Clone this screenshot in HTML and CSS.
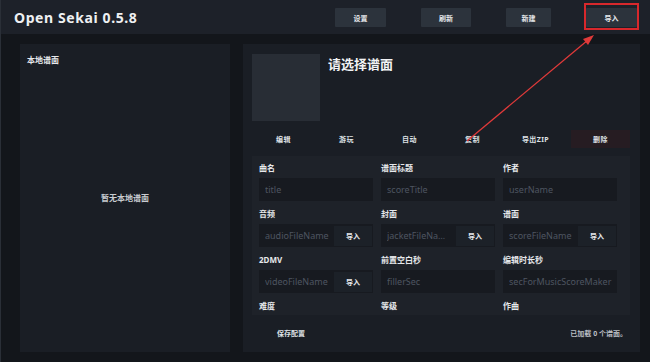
FILE: index.html
```html
<!DOCTYPE html>
<html lang="zh">
<head>
    <meta charset="UTF-8">
    <meta name="viewport" content="width=device-width, initial-scale=1.0">
    <title>Open Sekai</title>
    <link rel="stylesheet" href="styles.css">
</head>
<body>

<header class="topbar">
    <div class="brand">Open Sekai 0.5.8</div>
    <nav class="top-actions">
        <button class="top-btn w51">设置</button>
        <button class="top-btn w50">刷新</button>
        <button class="top-btn w45">新建</button>
        <button class="top-btn w51">导入</button>
    </nav>
</header>

<main class="layout">
    <!-- 本地谱面 -->
    <section class="panel local">
        <h2 class="panel-title">本地谱面</h2>
        <p class="empty">暂无本地谱面</p>
    </section>

    <!-- 谱面详情 -->
    <section class="panel detail">
        <div class="detail-head">
            <div class="cover"></div>
            <h1 class="detail-title">请选择谱面</h1>
        </div>

        <div class="actions">
            <button class="act">编辑</button>
            <button class="act">游玩</button>
            <button class="act">自动</button>
            <button class="act">复制</button>
            <button class="act">导出ZIP</button>
            <button class="act danger">删除</button>
        </div>

        <div class="fields">
            <div class="field">
                <label>曲名</label>
                <div class="box"><span class="ph">title</span></div>
            </div>
            <div class="field">
                <label>谱面标题</label>
                <div class="box"><span class="ph">scoreTitle</span></div>
            </div>
            <div class="field">
                <label>作者</label>
                <div class="box"><span class="ph">userName</span></div>
            </div>

            <div class="field">
                <label>音频</label>
                <div class="box"><span class="ph">audioFileName</span><button class="pick">导入</button></div>
            </div>
            <div class="field">
                <label>封面</label>
                <div class="box"><span class="ph">jacketFileNa…</span><button class="pick">导入</button></div>
            </div>
            <div class="field">
                <label>谱面</label>
                <div class="box"><span class="ph">scoreFileName</span><button class="pick">导入</button></div>
            </div>

            <div class="field">
                <label>2DMV</label>
                <div class="box"><span class="ph">videoFileName</span><button class="pick">导入</button></div>
            </div>
            <div class="field">
                <label>前置空白秒</label>
                <div class="box"><span class="ph">fillerSec</span></div>
            </div>
            <div class="field">
                <label>编辑时长秒</label>
                <div class="box"><span class="ph">secForMusicScoreMaker</span></div>
            </div>

            <div class="field">
                <label>难度</label>
                <div class="box"></div>
            </div>
            <div class="field">
                <label>等级</label>
                <div class="box"></div>
            </div>
            <div class="field">
                <label>作曲</label>
                <div class="box"></div>
            </div>
        </div>

        <div class="detail-foot">
            <button class="save">保存配置</button>
            <span class="count">已加载 0 个谱面。</span>
        </div>
    </section>
</main>

<!-- 标注 -->
<div class="mark-box"></div>
<svg class="mark-arrow" width="650" height="362" viewBox="0 0 650 362">
    <line x1="467" y1="141" x2="588" y2="40" stroke="#e03a3a" stroke-width="1.3"/>
    <polygon points="594,35 583,39 588,45" fill="#e03a3a"/>
</svg>

</body>
</html>
```

FILE: styles.css
```css
/* 全局 */
* {
    box-sizing: border-box;
}

body {
    margin: 0;
    width: 650px;
    height: 362px;
    overflow: hidden;
    background-color: #13161b;
    color: #e6e8eb;
    font-family: "Noto Sans", "Noto Sans CJK SC", sans-serif;
    border-left: 1px solid #2a2f37;
}

button {
    font-family: "Noto Sans", "Noto Sans CJK SC", sans-serif;
    border: none;
    cursor: pointer;
}

/* 顶栏 */
.topbar {
    height: 34px;
    background-color: #1d2129;
    display: flex;
    align-items: center;
    padding: 0 0 0 13px;
}

.brand {
    font-size: 14px;
    font-weight: 700;
    letter-spacing: 0.6px;
    color: #eef0f2;
}

.top-actions {
    display: flex;
    margin-left: auto;
    padding-top: 1px;
}

.top-btn {
    height: 19px;
    background-color: #2c333c;
    color: #e6e8eb;
    font-size: 7px;
    font-weight: 700;
    border-radius: 1px;
    margin-right: 35px;
}

.top-btn:last-child {
    margin-right: 13px;
}

.w51 { width: 51px; }
.w50 { width: 50px; }
.w45 { width: 45px; }

/* 主体 */
.layout {
    display: flex;
    gap: 13px;
    padding: 10px 10px 0 19px;
    height: 318px;
}

.panel {
    background-color: #1a1e25;
    height: 308px;
}

.local {
    width: 210px;
    padding: 10px 7px;
    display: flex;
    flex-direction: column;
}

.panel-title {
    margin: 0;
    font-size: 8px;
    font-weight: 700;
    line-height: 12px;
}

.empty {
    margin: 126px 0 0;
    text-align: center;
    font-size: 8px;
    font-weight: 700;
    color: #c9ccd1;
}

.detail {
    width: 397px;
    padding: 10px 10px 0 9px;
}

.detail-head {
    display: flex;
    gap: 8px;
}

.cover {
    width: 68px;
    height: 67px;
    background-color: #282d35;
}

.detail-title {
    margin: 0;
    font-size: 13px;
    font-weight: 700;
    line-height: 18px;
    padding-top: 1px;
    color: #f1f2f4;
}

.actions {
    display: grid;
    grid-template-columns: repeat(6, 63px);
    margin-top: 9px;
    height: 18px;
}

.act {
    background: none;
    color: #dfe2e6;
    font-size: 7px;
    font-weight: 700;
    letter-spacing: 0.4px;
}

.act.danger {
    background-color: #261c22;
    margin-left: 4px;
    width: 59px;
}

/* 表单 */
.fields {
    margin-top: 8px;
    width: 378px;
    height: 159px;
    overflow: hidden;
    background-color: #1e2229;
    padding: 6px 15px 0 7px;
    display: grid;
    grid-template-columns: repeat(3, 114px);
    column-gap: 8px;
    row-gap: 7px;
    align-content: start;
}

.field label {
    display: block;
    font-size: 8px;
    font-weight: 700;
    line-height: 12px;
    margin-bottom: 4px;
}

.box {
    height: 23px;
    background-color: #171a20;
    display: flex;
    align-items: center;
    padding-left: 6px;
    overflow: hidden;
}

.ph {
    flex: 1;
    font-size: 9px;
    color: #4e5561;
    white-space: nowrap;
    overflow: hidden;
}

.pick {
    width: 38px;
    height: 20px;
    margin: 0 1px 0 4px;
    background-color: #1c2128;
    color: #e6e8eb;
    font-size: 7px;
    font-weight: 700;
    flex-shrink: 0;
}

.detail-foot {
    display: flex;
    align-items: center;
    justify-content: space-between;
    height: 36px;
    padding: 0 3px 0 25px;
}

.save {
    background: none;
    color: #dfe2e6;
    font-size: 7px;
    font-weight: 700;
    padding: 0;
}

.count {
    font-size: 7px;
    font-weight: 700;
    color: #b9bdc3;
}

/* 标注 */
.mark-box {
    position: absolute;
    left: 584px;
    top: 3px;
    width: 55px;
    height: 27px;
    border: 2px solid #d8282c;
}

.mark-arrow {
    position: absolute;
    left: 0;
    top: 0;
    pointer-events: none;
}
```
